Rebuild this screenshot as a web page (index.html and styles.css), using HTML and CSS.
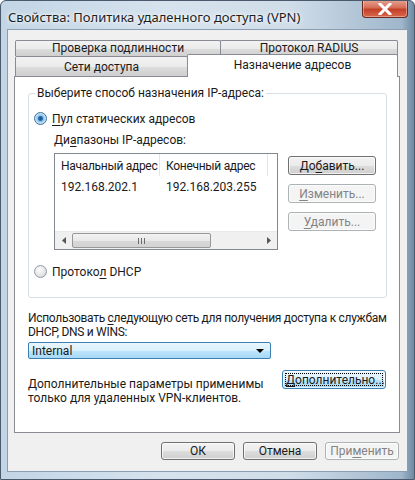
FILE: index.html
```html
<!DOCTYPE html>
<html lang="ru">
<head>
  <meta charset="UTF-8">
  <title>Свойства: Политика удаленного доступа (VPN)</title>
  <link rel="stylesheet" href="styles.css">
</head>
<body>

  <div class="window">
    <div class="titlebar">
      <span class="title">Свойства: Политика удаленного доступа (VPN)</span>
      <button class="close">
        <svg width="14" height="12" viewBox="0 0 14 12">
          <path d="M2 1 L12 11 M12 1 L2 11" stroke="#fff" stroke-width="3" stroke-linecap="square"/>
        </svg>
      </button>
    </div>

    <div class="client">
      <div class="tabs">
        <div class="tab-row back">
          <div class="tab wide">Проверка подлинности</div>
          <div class="tab">Протокол RADIUS</div>
        </div>
        <div class="tab-row front">
          <div class="tab narrow">Сети доступа</div>
          <div class="tab selected">Назначение адресов</div>
        </div>
      </div>

      <div class="panel">
        <fieldset class="group">
          <legend>Выберите способ назначения IP-адреса:</legend>

          <label class="radio-line">
            <span class="radio checked"></span>
            <span><u>П</u>ул статических адресов</span>
          </label>

          <div class="ranges">
            <div class="caption">Ди<u>а</u>пазоны IP-адресов:</div>
            <div class="ranges-body">
              <div class="listview">
                <div class="lv-header">
                  <div class="col first">Начальный адрес</div>
                  <div class="col second">Конечный адрес</div>
                  <div class="col rest"></div>
                </div>
                <div class="lv-row">
                  <div class="col first">192.168.202.1</div>
                  <div class="col second">192.168.203.255</div>
                </div>
                <div class="lv-space"></div>
                <div class="hscroll">
                  <div class="arrow">
                    <svg width="4" height="7" viewBox="0 0 4 7"><path d="M4 0 L0 3.5 L4 7 Z" fill="#555"/></svg>
                  </div>
                  <div class="track">
                    <div class="thumb"><span class="grip"></span></div>
                  </div>
                  <div class="arrow">
                    <svg width="4" height="7" viewBox="0 0 4 7"><path d="M0 0 L4 3.5 L0 7 Z" fill="#555"/></svg>
                  </div>
                </div>
              </div>

              <div class="side-buttons">
                <button class="btn">До<u>б</u>авить...</button>
                <button class="btn" disabled><u>И</u>зменить...</button>
                <button class="btn" disabled><u>У</u>далить...</button>
              </div>
            </div>
          </div>

          <label class="radio-line dhcp">
            <span class="radio"></span>
            <span>Протоко<u>л</u> DHCP</span>
          </label>
        </fieldset>

        <p class="note">Использовать <u>с</u>ледующую сеть для получения доступа к службам<br>DHCP, DNS и WINS:</p>

        <div class="combo">
          <span>Internal</span>
          <svg width="8" height="4" viewBox="0 0 8 4"><path d="M0 0 H8 L4 4 Z" fill="#000"/></svg>
        </div>

        <div class="extra">
          <p>Дополнительные параметры применимы<br>только для удаленных VPN-клиентов.</p>
          <button class="btn focused"><span class="focus-ring"><u>Д</u>ополнительно...</span></button>
        </div>
      </div>

      <div class="dialog-buttons">
        <button class="btn">ОК</button>
        <button class="btn">Отмена</button>
        <button class="btn" disabled>При<u>м</u>енить</button>
      </div>
    </div>
  </div>

</body>
</html>
```

FILE: styles.css
```css
* {
  box-sizing: border-box;
}
body {
  margin: 0;
  font-family: Roboto, "Noto Sans", sans-serif;
  font-size: 12px;
  color: #1a1a1a;
  background: #fff;
}

u {
  text-decoration-thickness: 1px;
  text-underline-offset: 2px;
}

/* window frame */
.window {
  width: 415px;
  height: 480px;
  border: 1px solid #4a5a6c;
  border-radius: 6px 6px 0 0;
  background: linear-gradient(90deg, #c2d5e5 0%, #d6e3ee 40%, #cfdde9 70%, #9fb6cb 97%, #6f8aa3 100%);
  display: flex;
  flex-direction: column;
  overflow: hidden;
}

.titlebar {
  height: 28px;
  flex: none;
  display: flex;
  justify-content: space-between;
  align-items: flex-start;
  padding-left: 7px;
  padding-right: 6px;
}
.title {
  margin-top: 7px;
  font-family: "Noto Sans", sans-serif;
  font-size: 13px;
  color: #1e1e1e;
  text-shadow: 0 0 6px #fff, 0 0 3px #fff;
}
.close {
  width: 46px;
  height: 18px;
  margin-top: -1px;
  border: 1px solid #6b2a20;
  border-top: none;
  border-radius: 0 0 4px 4px;
  background: linear-gradient(#e8a493 0%, #d56d56 45%, #c24128 55%, #d9664a 100%);
  box-shadow: inset 0 0 0 1px rgba(255, 255, 255, 0.35);
  display: flex;
  align-items: center;
  justify-content: center;
  padding: 0;
}

.client {
  flex: 1;
  margin: 0 6px 7px 6px;
  border: 1px solid #8b9db0;
  background: #f0f0f0;
  padding: 10px 7px 0 6px;
  display: flex;
  flex-direction: column;
}

/* tabs, two stacked rows */
.tabs {
  display: flex;
  flex-direction: column;
}
.tab-row {
  display: flex;
  height: 16px;
}
.tab-row.back {
  padding: 0 2px 0 1px;
}
.tab-row.front {
  height: 20px;
  padding-left: 1px;
  align-items: flex-end;
}
.tab {
  flex: 1;
  text-align: center;
  line-height: 15px;
  border: 1px solid #898c95;
  border-bottom: none;
  background: linear-gradient(#f2f2f2 0%, #ebebeb 50%, #dddddd 51%, #cfcfcf 100%);
  border-radius: 2px 2px 0 0;
}
.tab.wide {
  flex: 0 0 206px;
}
.tab-row.back .tab + .tab {
  margin-left: -1px;
}
.tab.narrow {
  flex: 0 0 173px;
  height: 20px;
  line-height: 20px;
}
.tab.selected {
  flex: 0 0 211px;
  height: 23px;
  line-height: 20px;
  margin-left: -1px;
  margin-bottom: -1px;
  background: #fff;
  position: relative;
  z-index: 1;
}

.panel {
  height: 357px;
  border: 1px solid #898c95;
  background: #fff;
  padding: 9px 12px 0 13px;
}

/* group box */
.group {
  margin: 0;
  border: 1px solid #d5dfe5;
  border-radius: 3px;
  padding: 0 0 0 5px;
  height: 212px;
}
.group legend {
  padding: 0 2px;
  margin-left: 1px;
  line-height: 15px;
}

.radio-line {
  display: flex;
  align-items: center;
  gap: 5px;
  margin-top: 10px;
  height: 15px;
}
.radio {
  width: 13px;
  height: 13px;
  border-radius: 50%;
  border: 1px solid #8e9bab;
  background: radial-gradient(circle at 40% 35%, #fcfcfc 0%, #e4e4e4 60%, #cacaca 100%);
}
.radio.checked {
  border-color: #3d6f9e;
  background: radial-gradient(circle, #1b4d86 0%, #2f73b8 28%, #8cc3ea 38%, #d7ecf8 75%, #edf6fc 100%);
}
.radio-line.dhcp {
  margin-top: 14px;
}

.ranges {
  margin-left: 20px;
}
.caption {
  margin-top: 7px;
  line-height: 15px;
}
.ranges-body {
  display: flex;
  margin-top: 5px;
}

/* list view with a horizontal scroll bar */
.listview {
  width: 224px;
  height: 97px;
  border: 1px solid #828790;
  display: flex;
  flex-direction: column;
}
.lv-header,
.lv-row {
  display: flex;
  white-space: nowrap;
}
.lv-header {
  height: 22px;
  letter-spacing: -0.3px;
}
.lv-header .col {
  padding-top: 3px;
  line-height: 18px;
  border-right: 1px solid #e5e5e5;
}
.lv-header .rest {
  flex: 1;
  border-right: none;
}
.col {
  padding-left: 6px;
}
.col.first {
  width: 105px;
}
.col.second {
  width: 108px;
}
.lv-row {
  height: 20px;
  align-items: center;
  margin-top: 1px;
}
.lv-space {
  flex: 1;
}
.hscroll {
  height: 18px;
  display: flex;
  background: #f0f0f0;
  border-top: 1px solid #e8e8e8;
}
.hscroll .arrow {
  width: 17px;
  display: flex;
  align-items: center;
  justify-content: center;
}
.track {
  flex: 1;
}
.thumb {
  width: 139px;
  height: 15px;
  margin-top: 1px;
  border: 1px solid #979797;
  border-radius: 2px;
  background: linear-gradient(#f3f3f3 0%, #e8e8e8 50%, #d9d9d9 51%, #d2d2d2 100%);
  display: flex;
  align-items: center;
  justify-content: center;
}
.grip {
  width: 7px;
  height: 6px;
  background: repeating-linear-gradient(90deg, #6b6b6b 0 1px, transparent 1px 3px);
}

.side-buttons {
  display: flex;
  flex-direction: column;
  gap: 9px;
  margin-left: 10px;
  margin-top: 3px;
}

/* push buttons */
.btn {
  font-family: inherit;
  font-size: 12px;
  color: #1a1a1a;
  height: 19px;
  width: 88px;
  padding: 0;
  border: 1px solid #707070;
  border-radius: 3px;
  background: linear-gradient(#f2f2f2 0%, #ebebeb 50%, #dddddd 51%, #cfcfcf 100%);
  box-shadow: inset 0 0 0 1px rgba(255, 255, 255, 0.7);
}
.btn:disabled {
  color: #838383;
  border-color: #adb2b5;
  background: #f4f4f4;
}
.btn.focused {
  width: 104px;
  margin-top: -3px;
  border-color: #3c7fb1;
  background: linear-gradient(#eaf6fd 0%, #d9f0fc 50%, #bee6fd 51%, #a7d9f5 100%);
  padding: 2px;
}
.focus-ring {
  display: block;
  height: 100%;
  border: 1px dotted #000;
  line-height: 12px;
}

.note {
  margin: 13px 0 0 0;
  line-height: 14px;
  white-space: nowrap;
  letter-spacing: -0.3px;
}

.combo {
  width: 243px;
  height: 17px;
  margin-top: 3px;
  border: 1px solid #3c7fb1;
  border-radius: 2px;
  background: linear-gradient(#eaf6fd 0%, #d9f0fc 50%, #bee6fd 51%, #a7d9f5 100%);
  display: flex;
  align-items: center;
  justify-content: space-between;
  padding: 0 6px 0 3px;
}

.extra {
  display: flex;
  justify-content: space-between;
  align-items: flex-start;
  margin-top: 14px;
  padding-right: 1px;
}
.extra p {
  margin: 4px 0 0 0;
  line-height: 14px;
}

.dialog-buttons {
  display: flex;
  justify-content: flex-end;
  gap: 8px;
  margin-top: 9px;
  padding-right: 1px;
}
.dialog-buttons .btn {
  width: 74px;
  height: 18px;
}
```
